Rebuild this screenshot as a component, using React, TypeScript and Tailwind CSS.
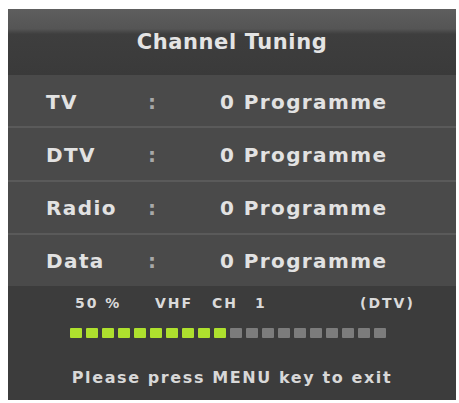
const rows = [
  { label: "TV", value: "0 Programme" },
  { label: "DTV", value: "0 Programme" },
  { label: "Radio", value: "0 Programme" },
  { label: "Data", value: "0 Programme" },
];

const TOTAL = 20;
const FILLED = 10;

export default function App() {
  return (
    <div className="h-[403px] w-[459px] bg-white pl-[8px] pt-[9px] font-['DejaVu_Sans',Verdana,sans-serif] font-bold">
      <div className="flex h-[391px] w-[448px] flex-col bg-[#3c3c3c]">
        {/* Title bar */}
        <div className="flex h-[66px] items-center justify-center pt-[2px] bg-[linear-gradient(to_bottom,#5e5e5e_0%,#555555_30%,#3e3e3e_38%,#3a3a3a_100%)]">
          <span className="text-[21px] tracking-[0.6px] text-[#e4e4e4]">Channel Tuning</span>
        </div>

        {/* Programme counts */}
        <div className="flex h-[211px] flex-col bg-[#4a4a4a]">
          {rows.map((row, i) => (
            <div
              key={row.label}
              className={
                "flex flex-1 items-center pl-[38px] pt-[2px] text-[20px] tracking-[1.4px] text-[#e2e2e2] " +
                (i > 0 ? "border-t-2 border-[#5a5a5a]" : "")
              }
            >
              <span className="w-[102px]">{row.label}</span>
              <span className="w-[72px] text-[#a8a8a8]">:</span>
              <span>{row.value}</span>
            </div>
          ))}
        </div>

        {/* Scan status */}
        <div className="flex flex-1 flex-col">
          <div className="flex h-[32px] items-center pl-[67px] pt-[2px] text-[14px] tracking-[2px] text-[#dadada]">
            <span className="w-[80px]">50 %</span>
            <span className="w-[57px]">VHF</span>
            <span className="w-[43px]">CH</span>
            <span className="w-[105px]">1</span>
            <span>(DTV)</span>
          </div>
          <div className="mt-[10px] flex gap-[4px] pl-[62px]">
            {Array.from({ length: TOTAL }, (_, i) => (
              <span
                key={i}
                className={
                  "h-[10px] w-[12px] rounded-[1px] " +
                  (i < FILLED ? "bg-[#aee02e]" : "bg-[#7c7c7c]")
                }
              />
            ))}
          </div>
          <div className="mt-[30px] text-center text-[16px] leading-[19px] tracking-[1.6px] text-[#d8d8d8]">
            Please press MENU key to exit
          </div>
        </div>
      </div>
    </div>
  );
}
